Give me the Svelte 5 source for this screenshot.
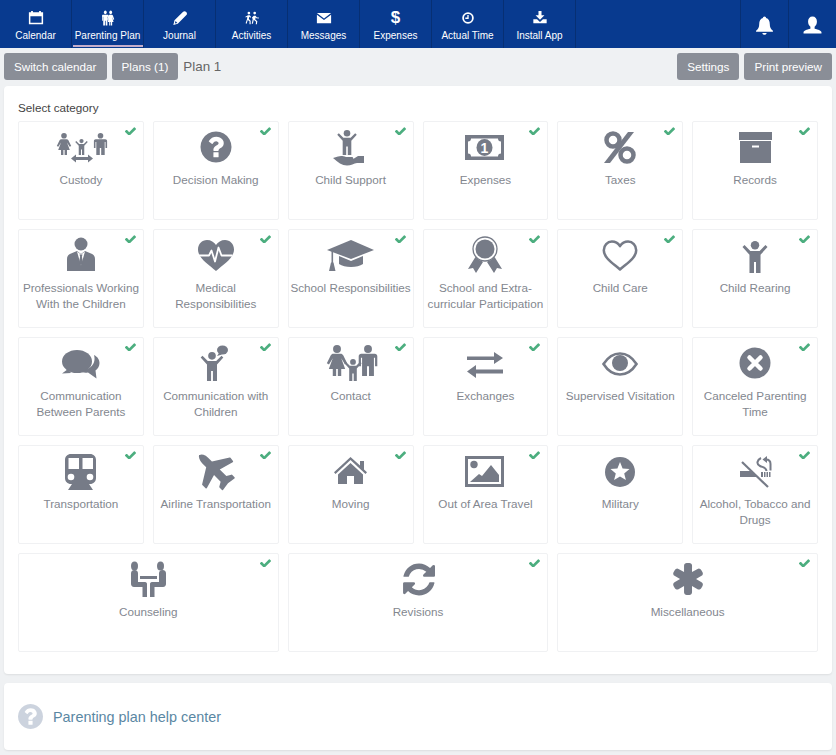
<script>
  const FA = {
    q: "M1024 1376v-192q0-14-9-23t-23-9h-192q-14 0-23 9t-9 23v192q0 14 9 23t23 9h192q14 0 23-9t9-23zm256-672q0-88-55.5-163t-138.5-116-170-41q-243 0-371 213-15 24 8 42l132 100q7 6 19 6 16 0 25-12 53-68 86-92 34-24 86-24 48 0 85.5 26t37.5 59q0 38-20 61t-68 45q-63 28-115.5 86.5t-52.5 125.5v36q0 14 9 23t23 9h192q14 0 23-9t9-23q0-19 21.5-49.5t54.5-49.5q32-18 49-28.5t46-35 44.5-48 28-60.5 12.5-81zm384 192q0 209-103 385.5t-279.5 279.5-385.5 103-385.5-103-279.5-279.5-103-385.5 103-385.5 279.5-279.5 385.5-103 385.5 103 279.5 279.5 103 385.5z",
    check: "M1671 566q0 40-28 68l-724 724-136 136q-28 28-68 28t-68-28l-136-136-362-362q-28-28-28-68t28-68l136-136q28-28 68-28t68 28l294 295 656-657q28-28 68-28t68 28l136 136q28 28 28 68z",
    refresh: "M1639 1056q0 5-1 7-64 268-268 434.5t-478 166.5q-146 0-282.5-55t-243.5-157l-129 129q-19 19-45 19t-45-19-19-45v-448q0-26 19-45t45-19h448q26 0 45 19t19 45-19 45l-137 137q71 66 161 102t187 36q134 0 250-65t186-179q11-17 53-117 8-23 30-23h192q13 0 22.5 9.5t9.5 22.5zm25-800v448q0 26-19 45t-45 19h-448q-26 0-45-19t-19-45 19-45l138-138q-148-137-349-137-134 0-250 65t-186 179q-11 17-53 117-8 23-30 23h-199q-13 0-22.5-9.5t-9.5-22.5v-7q65-268 270-434.5t480-166.5q146 0 284 55.5t245 156.5l130-129q19-19 45-19t45 19 19 45z",
    plane: "M1376 160q44 52 12 148t-108 172l-161 161 160 696q5 19-12 33l-128 96q-7 6-19 6-4 0-7-1-15-3-21-16l-279-508-259 259 53 194q5 17-8 31l-96 96q-9 9-23 9h-2q-15-2-24-13l-189-252-252-189q-11-7-13-23-1-13 9-25l96-97q9-9 23-9 6 0 8 1l194 53 259-259-508-279q-14-8-17-24-2-16 9-27l128-128q14-13 30-8l665 159 160-160q76-76 172-108t148-12z",
    star: "M1546 1050q46 26 59.5 77.5t-12.5 97.5l-64 110q-26 46-77.5 59.5t-97.5-12.5l-266-153v307q0 52-38 90t-90 38h-128q-52 0-90-38t-38-90v-307l-266 153q-46 26-97.5 12.5t-77.5-59.5l-64-110q-26-46-12.5-97.5t59.5-77.5l266-154-266-154q-46-26-59.5-77.5t12.5-97.5l64-110q26-46 77.5-59.5t97.5 12.5l266 153v-307q0-52 38-90t90-38h128q52 0 90 38t38 90v307l266-153q46-26 97.5-12.5t77.5 59.5l64 110q26 46 12.5 97.5t-59.5 77.5l-266 154z"
  };
  const fa = (d, x, y, s) => `<path transform="translate(${x} ${y}) scale(${s})" d="${d}"/>`;
  const man = (cx, y, h) => `<g transform="translate(${cx} ${y}) scale(${h / 22})"><circle cy="2.8" r="2.8"/><path d="M-4.8 6.2h9.6c1 0 1.8.8 1.8 1.8v7H5V9H4.2v13H.7v-7H-.7v7h-3.5V9H-5v6h-1.6V8c0-1 .8-1.8 1.8-1.8z"/></g>`;
  const woman = (cx, y, h) => `<g transform="translate(${cx} ${y}) scale(${h / 22})"><circle cy="2.8" r="2.8"/><path d="M-2.6 6.2h5.2c.8 0 1.4.4 1.8 1.1L7.2 13l-1.5.8L3 9.4l2.8 7.6H3V22H.6v-5H-.6v5H-3v-5h-2.8L-3 9.4-5.7 13.8-7.2 13l2.8-5.7c.4-.7 1-1.1 1.8-1.1z"/></g>`;
  const kid = (cx, y, h) => `<g transform="translate(${cx} ${y}) scale(${h / 22})"><circle cy="2.9" r="2.9"/><path d="M-7.2 2.8L-3.2 6.8h6.4L7.2 2.8l1.4 1.4L3.8 9.4V22H.7v-7.5H-.7V22h-3.1V9.4L-8.6 4.2z"/></g>`;
  const starPts = (cx, cy, R, r) => Array.from({ length: 10 }, (_, i) => {
    const a = -Math.PI / 2 + i * Math.PI / 5, q = i % 2 ? r : R;
    return `${(cx + q * Math.cos(a)).toFixed(1)},${(cy + q * Math.sin(a)).toFixed(1)}`;
  }).join(" ");
  const heart = "M32 35C24 28 14 22 14 13.5 14 8 18 4 23 4c4 0 7 2 9 5 2-3 5-5 9-5 5 0 9 4 9 9.5C50 22 40 28 32 35z";

  const icons = {
    custody: woman(15, 5, 22) + kid(32.5, 11, 16) + man(51.5, 5, 22) +
      `<path d="M22 30.5l5-4v2.5h12v-2.5l5 4-5 4V32H27v2.500z"/>`,
    decision: fa(FA.q, 13.9, 0.9, 0.0202),
    support: kid(28, 2, 25) +
      `<path d="M14 30l5-1.5c3-1 5-.5 8 .5h6c1.5 0 1.500 2 0 2.200h-5l7-.7 4-2.500h6v7h-7c-3 .5-6 2.500-10 2.500-5 0-9-3-14-7.500z"/>`,
    expenses: `<path fill-rule="evenodd" d="M12 7h39v25H12zM18 10.500a3 3 0 0 1-3 3v12a3 3 0 0 1 3 3h27a3 3 0 0 1 3-3v-12a3 3 0 0 1-3-3z"/><ellipse cx="31.500" cy="19.500" rx="8" ry="8.500"/><text x="31.500" y="24.500" font-size="14" font-weight="700" font-family="Liberation Sans, sans-serif" text-anchor="middle" fill="#fff">1</text>`,
    taxes: `<circle cx="25" cy="12" r="6.500" fill="none" stroke="currentColor" stroke-width="4.500"/><circle cx="39" cy="27" r="6.500" fill="none" stroke="currentColor" stroke-width="4.500"/><path d="M40 4h6L22 35h-6z"/>`,
    records: `<rect x="16" y="4" width="33" height="8"/><path fill-rule="evenodd" d="M17 13h31v22H17zM29 17.500v2h7v-2z"/>`,
    professionals: `<circle cx="32" cy="8" r="6.500"/><path d="M18 35V23c0-3 1.500-4.500 4-5.500l6-2.500 4 3 4-3 6 2.500c2.500 1 4 2.500 4 5.500v12z"/><path fill="#fff" d="M28 15.500l4 14 4-14-4 3z"/><path d="M30.500 18.500h3l-.6 2 1 5.500-1.900 4-1.900-4 1-5.500z"/>`,
    medical: `<path d="${heart}"/><path d="M14 19.500h11l2.500-5 3.500 11 3.500-14 3 8h11" fill="none" stroke="#fff" stroke-width="1.800" stroke-linejoin="round"/>`,
    school: `<path d="M8 14L32 4l23 10-23 9z"/><path d="M20 20l12 5 12-5v8c-3 2-7 3-12 3s-9-1-12-3z"/><path d="M12.500 15h1.600v12h-1.600z"/><path d="M12 26.500h2.500l2 8.500h-6.500z"/>`,
    extra: `<path d="M23 20l-8 13 5-1 3 5 7-11zM41 20l8 13-5-1-3 5-7-11z"/><circle cx="32" cy="13" r="12.500" fill="#fff"/><circle cx="32" cy="13" r="12" fill="none" stroke="currentColor" stroke-width="1.300"/><circle cx="32" cy="13" r="9.500"/>`,
    care: `<path d="${heart}" fill="none" stroke="currentColor" stroke-width="2.800" stroke-linejoin="round" transform="translate(3.200 2) scale(.9)"/>`,
    rearing: kid(32, 5, 32),
    parents: `<ellipse cx="28" cy="17.500" rx="15" ry="11.500"/><path d="M19 25l-6 4.500 9-.5z" /><path d="M45 11c4 2 5.500 5 5.500 8 0 3-1.500 5.500-4 7.500l1 8-8.500-6c-3 .5-6 0-9-1 8-.5 18-6 15-16.500z"/>`,
    children: kid(28, 8, 29) + `<ellipse cx="38.500" cy="6" rx="5.500" ry="4.500"/><path d="M35 9l-2 3 5-1.500z"/>`,
    contact: woman(18, 1, 31) + man(49, 1, 31) + kid(34, 15, 22),
    exchanges: `<path d="M14 12.500h27V8l9 6-9 6v-4H14zM50 25.500H23V21l-9 6.500 9 6.500v-4.500h27z"/>`,
    supervised: `<path d="M15.500 20C20 13 26 9.500 32 9.500S44 13 48.500 20C44 27 38 30.500 32 30.500S20 27 15.500 20z" fill="none" stroke="currentColor" stroke-width="2.600"/><circle cx="32" cy="19" r="8"/>`,
    canceled: `<circle cx="32" cy="19" r="15.500"/><path d="M26.500 13.500l11 11m0-11l-11 11" stroke="#fff" stroke-width="4.500" stroke-linecap="round"/>`,
    transportation: `<path fill-rule="evenodd" d="M22 2h19c3.500 0 6 2.500 6 6v18c0 3.500-2.500 6-6 6H22c-3.500 0-6-2.500-6-6V8c0-3.500 2.500-6 6-6zM19.500 6v11H30V6zM33.500 6v11H44V6z"/><circle cx="22" cy="25" r="3.300" fill="#fff"/><circle cx="41" cy="25" r="3.300" fill="#fff"/><path d="M23 32h17l4 6H19z"/>`,
    airline: `<path transform="translate(32.500 19) rotate(-90) scale(.0255) translate(-750 -820)" d="${FA.plane}"/>`,
    moving: `<path d="M41 9h4v8.500l3 2.800-1.500 1.600L31.500 8 16.500 21.900 15 20.300 31.500 5 41 13.500z"/><path d="M31.500 11L44 22.500V32H35V24h-7v8h-9V22.500z"/>`,
    travel: `<rect x="13.500" y="5.500" width="36" height="28" fill="none" stroke="currentColor" stroke-width="3"/><circle cx="21" cy="12.500" r="3.700"/><path d="M17 30l9-8 3 2 9-11 8 10v7z"/>`,
    military: `<circle cx="32" cy="20" r="15"/><polygon fill="#fff" points="${starPts(32, 20, 10, 4.400)}"/>`,
    alcohol: `<path d="M19 10l26 25" stroke="currentColor" stroke-width="2.200" fill="none"/><path d="M17 19h11l6 6H17zM38 20h2v5h-2z"/><path d="M41 20h1.500v5H41zM43.500 20H45v5h-1.500zM46 20h1.500v5H46z"/><path d="M38 6c-4 2-5 6-1 8 3 1.500 6 1 6.500 5" fill="none" stroke="currentColor" stroke-width="2"/><path d="M43 7.500c3 0 4.500 2 4.500 4.500v6.500" fill="none" stroke="currentColor" stroke-width="2"/><path d="M44 4l-4.500 3.500L44 11z"/>`,
    counseling: `<ellipse cx="18.500" cy="6" rx="3.500" ry="4.500"/><ellipse cx="44.500" cy="6" rx="3.500" ry="4.500"/><path d="M15 13.500a3.500 3.500 0 0 1 7 0V22h7c1.500 0 2 1 2 2V37h-4.500V27H18c-2 0-3-1.500-3-3z"/><path d="M50 13.500a3.500 3.500 0 0 0-7 0V22h-7c-1.500 0-2 1-2 2V37h4.500V27H47c2 0 3-1.500 3-3z"/><path d="M24 16h17v3H24z"/>`,
    revisions: fa(FA.refresh, 14.400, 0.900, 0.0208),
    misc: fa(FA.star, 13.400, 0.400, 0.0208)
  };

  const cats = [
    ["Custody", "custody", 1], ["Decision Making", "decision", 1], ["Child Support", "support", 1],
    ["Expenses", "expenses", 1], ["Taxes", "taxes", 1], ["Records", "records", 1],
    ["Professionals Working With the Children", "professionals", 1], ["Medical Responsibilities", "medical", 1], ["School Responsibilities", "school", 1],
    ["School and Extra-curricular Participation", "extra", 1], ["Child Care", "care", 1], ["Child Rearing", "rearing", 1],
    ["Communication Between Parents", "parents", 1], ["Communication with Children", "children", 1], ["Contact", "contact", 1],
    ["Exchanges", "exchanges", 1], ["Supervised Visitation", "supervised", 0], ["Canceled Parenting Time", "canceled", 1],
    ["Transportation", "transportation", 1], ["Airline Transportation", "airline", 1], ["Moving", "moving", 1],
    ["Out of Area Travel", "travel", 1], ["Military", "military", 0], ["Alcohol, Tobacco and Drugs", "alcohol", 1],
    ["Counseling", "counseling", 1, true], ["Revisions", "revisions", 1, true], ["Miscellaneous", "misc", 1, true]
  ];

  const nav = [
    ["Calendar", `<path fill-rule="evenodd" d="M1 2.500h2.500V1h2v1.500h7V1h2v1.500H17V16H1zM2.700 7v7.300h12.600V7z"/>`],
    ["Parenting Plan", `<g transform="translate(9 0) scale(.72 1) translate(-9 0)">${man(4.8, 0.5, 17)}${woman(13.2, 0.5, 17)}</g>`],
    ["Journal", `<path fill-rule="evenodd" d="M1.500 17l1.300-5.500L12.500 2c1-1 2.500-.8 3.500.2s1.200 2.500.2 3.500L6.500 15.500zM4 12.500l-.8 2.800 2.800-.8z"/>`],
    ["Activities", `<circle cx="5.500" cy="3.500" r="1.500"/><circle cx="12" cy="3.500" r="1.500"/><path d="M1.500 7.500l3-1.500 2 0 1.500 2-.8.6L5.800 7.500 5.500 10l2 2v4H6.200v-3.300l-2-1.500L3 15.500 1.800 15l1.600-5 .3-2.300-1.700.8zM9 8.300l2-1.800h2l1.500 1.800 2.200.2v1.100l-2.800-.3-.9-1-.3 2.500 2.300 1.800-.5 3.400h-1.300l.4-2.800L11 11l-1 4.500H8.700l1.300-6.300-.9.7z"/>`],
    ["Messages", `<path d="M1 3.500h16L9 9.500zM1 5.300l8 6 8-6V15H1z"/>`],
    ["Expenses", null],
    ["Actual Time", `<circle cx="9" cy="9" r="5.500" fill="none" stroke="currentColor" stroke-width="2"/><path d="M9 5.500v3.800H6" fill="none" stroke="currentColor" stroke-width="1.500"/>`],
    ["Install App", `<path d="M7.300 1h3.400v5H14l-5 5-5-5h3.300z"/><path d="M1.500 10.500h4.200l3.300 3 3.300-3h4.200V15h-15z"/>`]
  ];
</script>

<div class="page">
  <nav class="topbar">
    {#each nav as [label, svg], i}
      <div class="item" class:active={i === 1}>
        {#if svg}
          <svg class="nicon" viewBox="0 0 18 18" fill="currentColor">{@html svg}</svg>
        {:else}
          <span class="dollar">$</span>
        {/if}
        <span class="nlabel">{label}</span>
      </div>
    {/each}
    <div class="spacer"></div>
    <div class="side">
      <svg class="sicon" viewBox="0 0 18 18" fill="currentColor"><path d="M9 .500c1 0 1.500.7 1.500 1.500 2.500.7 3.500 3 3.500 5.500 0 3 1 4.800 3 6.500v1H1v-1c2-1.700 3-3.500 3-6.500C4 5 5 2.700 7.500 2 7.500 1.200 8 .500 9 .500zM7 16h4c0 1-1 1.800-2 1.800S7 17 7 16z"/></svg>
    </div>
    <div class="side">
      <svg class="sicon" viewBox="0 0 18 18" fill="currentColor"><path d="M9 .500c2.600 0 4.200 2 4.200 4.700 0 2.300-1 4-2.200 5v1.800c3.500.7 6.500 1.800 6.500 3.300v1.200H.500V15.300c0-1.500 3-2.600 6.500-3.300v-1.800C5.800 9.200 4.800 7.500 4.800 5.200 4.800 2.500 6.400.500 9 .500z"/></svg>
    </div>
  </nav>

  <div class="toolbar">
    <button>Switch calendar</button>
    <button>Plans (1)</button>
    <span class="plan">Plan 1</span>
    <div class="spacer"></div>
    <button>Settings</button>
    <button>Print preview</button>
  </div>

  <section class="panel main">
    <h2>Select category</h2>
    <div class="grid">
      {#each cats as [label, icon, ok, wide]}
        <div class="card" class:wide>
          {#if ok}
            <svg class="check" viewBox="128 300 1543 1100" fill="currentColor"><path d={FA.check} /></svg>
          {/if}
          <svg class="icon" viewBox="0 0 64 44" fill="currentColor">{@html icons[icon]}</svg>
          <span class="label">{label}</span>
        </div>
      {/each}
    </div>
  </section>

  <section class="panel help">
    <svg class="hicon" viewBox="128 128 1536 1536" fill="currentColor"><path d={FA.q} /></svg>
    <span class="hlink">Parenting plan help center</span>
  </section>
</div>

<style>
  :global(body) { margin: 0; background: #eff1f3; }
  .page {
    width: 836px; height: 755px; overflow: hidden;
    font-family: "Liberation Sans", Arial, sans-serif;
    background: #eff1f3;
  }
  .topbar {
    height: 48px; display: flex; background: #083a8f; color: #fff;
  }
  .item {
    width: 72px; box-sizing: border-box; border-right: 1px solid #072f73;
    display: flex; flex-direction: column; align-items: center;
    padding-top: 10px; position: relative;
  }
  .item.active::after {
    content: ""; position: absolute; left: 1px; right: 0; top: 45px; height: 2px; background: #c4aecb;
  }
  .nicon { width: 16px; height: 16px; display: block; margin-bottom: 2px; }
  .dollar { height: 18px; font-size: 17px; line-height: 16px; font-weight: 700; display: block; }
  .nlabel { font-size: 10px; line-height: 13px; margin-top: 1px; white-space: nowrap; }
  .spacer { flex: 1; }
  .side {
    width: 48px; box-sizing: border-box; border-left: 1px solid #072f73;
    display: flex; align-items: center; justify-content: center;
  }
  .sicon { width: 19px; height: 19px; margin-top: 2px; }
  .toolbar {
    height: 38px; box-sizing: border-box; padding: 5px 4px 6px;
    display: flex; align-items: center; gap: 5px;
  }
  button {
    height: 27px; padding: 0 10px; border: 0; border-radius: 3px;
    background: #8a8e97; color: #fff;
    font: 11.7px "Liberation Sans", Arial, sans-serif;
  }
  .plan { font-size: 13.4px; color: #666; }
  .panel {
    margin: 0 4px; background: #fff; border-radius: 4px;
    box-shadow: 0 1px 2px rgba(0, 0, 0, .08);
  }
  .main { height: 588px; box-sizing: border-box; padding: 14px 14px 0; }
  h2 {
    margin: 0; font-size: 11.7px; font-weight: 400; line-height: 16px; color: #444;
  }
  .grid {
    margin-top: 5px;
    display: grid; grid-template-columns: repeat(6, 1fr); grid-auto-rows: 99px; gap: 9px;
  }
  .card {
    position: relative; box-sizing: border-box;
    border: 1px solid #f0f1f3; border-radius: 2px;
    display: flex; flex-direction: column; align-items: center;
    padding: 6px 1px 0; text-align: center; color: #767b87;
  }
  .card.wide { grid-column: span 2; }
  .icon { width: 64px; height: 44px; display: block; flex: none; }
  .label { font-size: 11.7px; line-height: 16px; color: #83878f; }
  .check { position: absolute; top: 5px; right: 7px; width: 11px; height: 8px; color: #4cae7f; }
  .help {
    margin-top: 9px; height: 67px; box-sizing: border-box; padding: 0 14px;
    display: flex; align-items: center; gap: 10px;
  }
  .hicon { width: 25px; height: 25px; color: #ccd3de; flex: none; }
  .hlink { font-size: 14.4px; color: #5a87a3; }
</style>
